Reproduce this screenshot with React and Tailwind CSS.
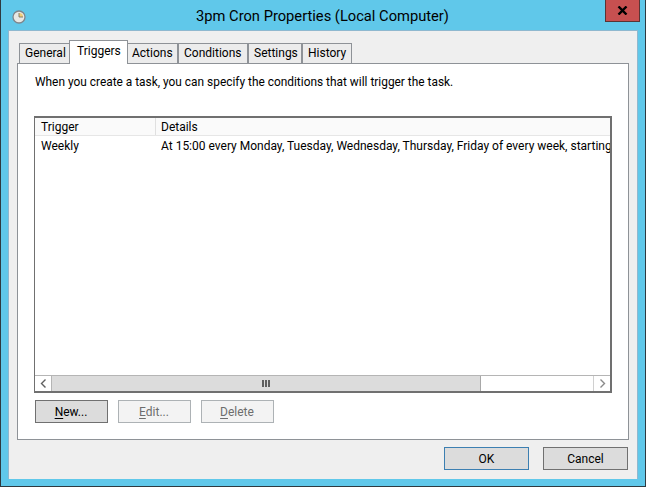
const tabs = [
  { label: "General", box: "w-[51px] pl-[5px]" },
  { label: "Triggers", box: "w-[59px] pl-[7px]", active: true },
  { label: "Actions", box: "w-[51px] pl-[4px]" },
  { label: "Conditions", box: "w-[70px] pl-[5px]" },
  { label: "Settings", box: "w-[54px] pl-[5px]" },
  { label: "History", box: "w-[50px] pl-[5px]" },
];

function ClockIcon() {
  return (
    <svg width="14" height="14" viewBox="0 0 14 14">
      <circle cx="7" cy="7" r="6" fill="#e8e8e4" stroke="#7f868c" strokeWidth="1.3" />
      <path d="M7 3A4 4 0 0 1 11 7H7Z" fill="#f3cf7a" />
      <path d="M7 3V7H11" fill="none" stroke="#6b6b5e" strokeWidth="0.8" />
    </svg>
  );
}

function Tab({ tab }) {
  if (tab.active) {
    return (
      <div className={`${tab.box} relative z-10 -mx-px -mb-px h-[24px] shrink-0 border border-b-0 border-[#8e9297] bg-white text-[12px] leading-[20px]`}>
        {tab.label}
      </div>
    );
  }
  return (
    <div className={`${tab.box} h-[20px] shrink-0 border border-b-0 border-[#8e9297] bg-[#ececec] text-[12px] leading-[19px]`}>
      {tab.label}
    </div>
  );
}

function ActionButton({ hot, rest, disabled }) {
  const look = disabled
    ? "border-[#adb2b5] bg-[#f3f3f3] text-[#6d6d6d]"
    : "border-[#707070] bg-[#dcdcdc] text-black";
  return (
    <button className={`h-[23px] w-[73px] border ${look} pr-[1px] text-center text-[12px] leading-[20px]`}>
      <span className="underline underline-offset-2">{hot}</span>
      {rest}
    </button>
  );
}

function ScrollBar() {
  return (
    <div className="flex h-[16px] border-t border-[#b5b5b5] bg-white">
      <div className="flex w-[17px] items-center justify-center border-r border-[#b5b5b5]">
        <svg width="7" height="9" viewBox="0 0 7 9">
          <path d="M5.5 0.5L1.5 4.5L5.5 8.5" fill="none" stroke="#606060" strokeWidth="1.4" />
        </svg>
      </div>
      <div className="flex w-[429px] items-center justify-center border-r border-[#a8a8a8] bg-[#dcdcdc]">
        <div className="flex gap-[1px]">
          <div className="h-[7px] w-[2px] bg-[#606060]" />
          <div className="h-[7px] w-[2px] bg-[#606060]" />
          <div className="h-[7px] w-[2px] bg-[#606060]" />
        </div>
      </div>
      <div className="flex-1" />
      <div className="flex w-[17px] items-center justify-center border-l border-[#d0d0d0]">
        <svg width="7" height="9" viewBox="0 0 7 9">
          <path d="M1.5 0.5L5.5 4.5L1.5 8.5" fill="none" stroke="#8a8a8a" strokeWidth="1.4" />
        </svg>
      </div>
    </div>
  );
}

export default function App() {
  return (
    <div className="flex h-[487px] w-[646px] flex-col overflow-hidden border border-t-0 border-[#2e3a40] bg-[#60c8ea] px-[7px] pb-[7px] font-['Roboto',sans-serif] text-black">
      <div className="flex h-[30px] shrink-0 items-start">
        <div className="mt-[10px] ml-[4px]">
          <ClockIcon />
        </div>
        <div className="mt-[5px] flex-1 pl-[14px] text-center text-[14.7px] leading-[22px]">3pm Cron Properties (Local Computer)</div>
        <div className="mr-[-2px] flex h-[22px] w-[35px] items-center justify-center border border-t-0 border-[#5a3434] bg-[#c75050]">
          <svg width="11" height="9" viewBox="0 0 11 9">
            <path d="M1.5 0.5L9.5 8.5M9.5 0.5L1.5 8.5" stroke="#000" strokeWidth="2.4" />
          </svg>
        </div>
      </div>

      <div className="flex min-h-0 flex-1 flex-col border border-b-0 border-[#8fb8cf] bg-[#efefef] px-[8px] pt-[11px]">
        <div className="flex h-[21px] items-end pl-[2px]">
          {tabs.map((tab) => (
            <Tab key={tab.label} tab={tab} />
          ))}
        </div>

        <div className="flex h-[377px] flex-col border border-[#8e9297] bg-white px-[16px] pt-[10px]">
          <p className="pl-[1px] text-[11.9px] leading-[16px]">When you create a task, you can specify the conditions that will trigger the task.</p>

          <div className="mt-[26px] flex h-[277px] flex-col overflow-hidden border-2 border-l-[1px] border-[#707070]">
            <div className="flex h-[18px] shrink-0 border-b border-[#e6e6e6] bg-[#fafafa] text-[12px] leading-[19px]">
              <div className="w-[121px] border-r border-[#e0e0e0] pl-[6px]">Trigger</div>
              <div className="pl-[5px]">Details</div>
            </div>
            <div className="flex h-[20px] shrink-0 text-[12px] leading-[21px] whitespace-nowrap">
              <div className="w-[121px] pl-[6px]">Weekly</div>
              <div className="min-w-0 flex-1 pl-[5px]">At 15:00 every Monday, Tuesday, Wednesday, Thursday, Friday of every week, starting</div>
            </div>
            <div className="flex-1" />
            <ScrollBar />
          </div>

          <div className="mt-[7px] flex gap-[10px] pl-[1px]">
            <ActionButton hot="N" rest="ew..." />
            <ActionButton hot="E" rest="dit..." disabled />
            <ActionButton hot="D" rest="elete" disabled />
          </div>
        </div>

        <div className="flex justify-end gap-[14px] pt-[7px] pr-[1px]">
          <button className="h-[23px] w-[85px] border border-[#3c7fb1] bg-[#dcdcdc] text-[12px] leading-[20px]">OK</button>
          <button className="h-[23px] w-[85px] border border-[#707070] bg-[#dcdcdc] text-[12px] leading-[20px]">Cancel</button>
        </div>
      </div>
    </div>
  );
}
